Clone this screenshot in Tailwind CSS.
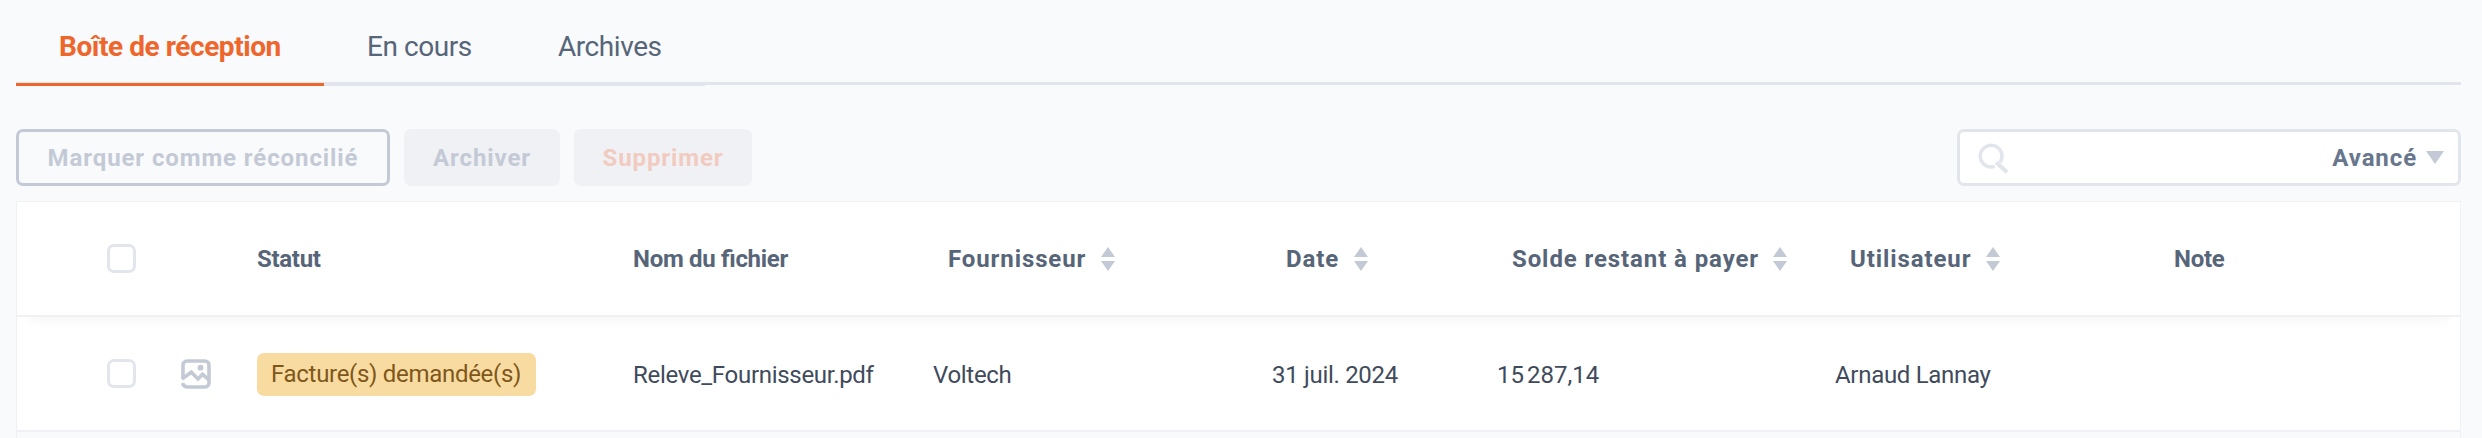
<!DOCTYPE html>
<html lang="fr">
<head>
    <meta charset="UTF-8">
    <meta name="viewport" content="width=device-width, initial-scale=1.0">
    <title>Boîte de réception</title>
    <script src="https://cdn.jsdelivr.net/npm/@tailwindcss/browser@4"></script>
</head>
<body class="bg-[#f9fafc] font-['Roboto',sans-serif] overflow-hidden">
    <div class="h-[438px] pl-4 pr-[21px] flex flex-col overflow-hidden">

        <!-- Onglets -->
        <nav class="flex h-[85px] shrink-0 border-b-[3px] border-[#e2e5eb] text-[28px] leading-[33px] tracking-[-0.44px] text-[#576579]">
            <a href="#" class="-mb-1 w-[308px] pl-[43px] pt-[30px] border-b-[3px] border-[#ee662b] font-bold text-[#ee662b] whitespace-nowrap">Boîte de réception</a>
            <a href="#" class="-mb-1 w-[190px] pl-[43px] pt-[30px] border-b-[3px] border-[#e2e5eb] whitespace-nowrap">En cours</a>
            <a href="#" class="-mb-1 w-[191px] pl-[44px] pt-[30px] border-b-[3px] border-[#e2e5eb] whitespace-nowrap">Archives</a>
        </nav>

        <!-- Actions et recherche -->
        <div class="mt-11 flex shrink-0 h-[57px] text-2xl leading-[28px] font-bold tracking-[0.9px]">
            <button class="w-[374px] rounded-[7px] border-[3px] border-[#c4cad5] text-[#c4cad5] whitespace-nowrap">Marquer comme réconcilié</button>
            <button class="ml-3.5 w-[156px] rounded-[7px] bg-[#f0f1f5] text-[#c4cad5]">Archiver</button>
            <button class="ml-3.5 w-[178px] rounded-[7px] bg-[#f0f1f5] text-[#f1cbc0]">Supprimer</button>
            <div class="ml-auto w-[504px] flex items-center rounded-[7px] border-[3px] border-[#e2e5eb] bg-white pl-[18px] pr-[14px]">
                <svg class="w-8 h-8" viewBox="0 0 32 32" fill="none" stroke="#e2e5eb" stroke-width="3.5">
                    <path d="M16.8 24.3A10.8 10.8 0 1 1 22 20.3"/>
                    <path d="M18.2 20.3L29 30.3" stroke-width="4.2"/>
                </svg>
                <span class="ml-auto text-[#68778d]">Avancé</span>
                <svg class="ml-[9px] w-[18px] h-[13px]" viewBox="0 0 18 13" fill="#c4cad5"><path d="M0 0h18L9 13z"/></svg>
            </div>
        </div>

        <!-- Tableau -->
        <div class="mt-[15px] h-[260px] shrink-0 border border-[#f0f1f5] text-2xl leading-[28px] tracking-[-0.3px]">
            <div class="relative h-[115px] flex items-center pl-[90px] bg-white border-b-2 border-[#f0f1f5] font-bold text-[#576579] whitespace-nowrap shadow-[0_14px_12px_-12px_rgba(0,0,0,0.05)]">
                <div class="w-[150px]"><div class="size-[29px] rounded-[7px] border-[3px] border-[#e2e5eb]"></div></div>
                <div class="w-[376px]">Statut</div>
                <div class="w-[300px] [font-feature-settings:'liga']">Nom du fichier</div>
                <div class="w-[338px] pl-[15px] flex items-center tracking-[0.9px]">Fournisseur
                    <svg class="ml-[15px] w-[14px] h-6" viewBox="0 0 14 24" fill="#c4cad5"><path d="M7 0l7 10H0zM0 14h14L7 24z"/></svg>
                </div>
                <div class="w-[226px] pl-[15px] flex items-center tracking-[0.9px]">Date
                    <svg class="ml-[15px] w-[14px] h-6" viewBox="0 0 14 24" fill="#c4cad5"><path d="M7 0l7 10H0zM0 14h14L7 24z"/></svg>
                </div>
                <div class="w-[338px] pl-[15px] flex items-center tracking-[0.9px]">Solde restant à payer
                    <svg class="ml-[14px] w-[14px] h-6" viewBox="0 0 14 24" fill="#c4cad5"><path d="M7 0l7 10H0zM0 14h14L7 24z"/></svg>
                </div>
                <div class="w-[339px] pl-[15px] flex items-center tracking-[0.9px]">Utilisateur
                    <svg class="ml-[15px] w-[14px] h-6" viewBox="0 0 14 24" fill="#c4cad5"><path d="M7 0l7 10H0zM0 14h14L7 24z"/></svg>
                </div>
                <div>Note</div>
            </div>
            <div class="h-[115px] flex items-center pl-[90px] bg-white border-b-2 border-[#f0f1f5] text-[#3f4b5c] whitespace-nowrap">
                <div class="w-[74px]"><div class="size-[29px] rounded-[7px] border-[3px] border-[#e2e5eb]"></div></div>
                <div class="w-[76px]">
                    <svg class="size-[30px]" viewBox="0 0 30 30" fill="none" stroke="#c4cad5" stroke-width="3.6">
                        <path d="M2 20V6a4 4 0 0 1 4-4h18a4 4 0 0 1 4 4v18a4 4 0 0 1-4 4H6.5a5.500 5.500 0 0 1-5-4"/>
                        <path d="M1 20l9.300-6.800 6.700 6.800 4.500-4.700 6.500 5.500"/>
                        <circle cx="19.500" cy="8.700" r="2.900" fill="#c4cad5" stroke="none"/>
                    </svg>
                </div>
                <div class="w-[376px] pt-0.5"><span class="flex items-center w-[279px] h-[43px] pl-[14px] pb-px rounded-[7px] bg-[#f8dba1] text-[#7f571b]">Facture(s) demandée(s)</span></div>
                <div class="w-[300px] pt-0.5">Releve_Fournisseur.pdf</div>
                <div class="w-[338px] pt-0.5">Voltech</div>
                <div class="w-[226px] pt-0.5 pl-px">31 juil. 2024</div>
                <div class="w-[338px] pt-0.5 tracking-[-0.4px]">15&#8239;287,14</div>
                <div class="pt-0.5">Arnaud Lannay</div>
            </div>
        </div>
    </div>
</body>
</html>
